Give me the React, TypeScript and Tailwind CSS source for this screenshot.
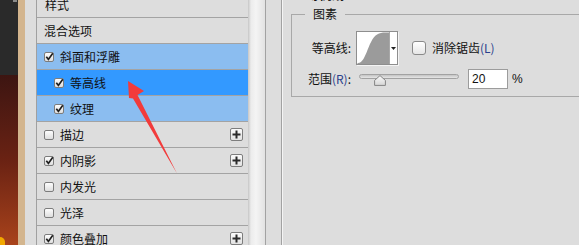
import React from "react";

const CJK = '"Noto Sans CJK SC", "Noto Sans", sans-serif';

function Check({ checked }: { checked: boolean }) {
  return (
    <svg width="10" height="10" viewBox="0 0 10 10" className="shrink-0">
      <defs>
        <linearGradient id="cbg" x1="0" y1="0" x2="0" y2="1">
          <stop offset="0" stopColor="#ffffff" />
          <stop offset="1" stopColor="#dcdcdc" />
        </linearGradient>
      </defs>
      <rect x="0.5" y="0.5" width="9" height="9" rx="1.5" fill="url(#cbg)" stroke="#7c7c7c" />
      {checked && (
        <path d="M2.3 4.8 L4.4 7.4 L8.8 1.2" fill="none" stroke="#1e1e1e" strokeWidth="1.7" />
      )}
    </svg>
  );
}

function Plus() {
  return (
    <div className="w-[13px] h-[13px] border border-[#7d7d7d] rounded-[2px] bg-gradient-to-b from-[#fafafa] to-[#e2e2e2] flex items-center justify-center">
      <svg width="9" height="9" viewBox="0 0 9 9">
        <path d="M4.5 0.5 V8.5 M0.5 4.5 H8.5" stroke="#2a2a2a" strokeWidth="2" />
      </svg>
    </div>
  );
}

type Row = {
  label: string;
  check?: boolean | null;
  sub?: boolean;
  bg?: string;
  plus?: boolean;
};

const rows: Row[] = [
  { label: "样式", check: null },
  { label: "混合选项", check: null },
  { label: "斜面和浮雕", check: true, bg: "light" },
  { label: "等高线", check: true, sub: true, bg: "dark" },
  { label: "纹理", check: true, sub: true, bg: "light" },
  { label: "描边", check: false, plus: true },
  { label: "内阴影", check: true, plus: true },
  { label: "内发光", check: false },
  { label: "光泽", check: false },
  { label: "颜色叠加", check: true, plus: true },
];

function ListRow({ r }: { r: Row }) {
  const bg =
    r.bg === "light" ? "bg-[#8bbdf0]" : r.bg === "dark" ? "bg-[#3399ff]" : "bg-[#dddddd]";
  const pl = r.check === null ? (r.label === "样式" ? "pl-[8px]" : "pl-[7px]") : r.sub ? "pl-[17px]" : "pl-[7px]";
  return (
    <div
      className={`h-[26px] shrink-0 border-b border-[#a3a3a3] flex items-center pr-[5px] ${bg} ${pl}`}
    >
      {r.check !== null && r.check !== undefined && (
        <div className="mr-[6px] flex items-center">
          <Check checked={r.check} />
        </div>
      )}
      <span className="text-[12px] leading-[16px] text-[#111]">{r.label}</span>
      <div className="flex-1" />
      {r.plus && <Plus />}
    </div>
  );
}

function ContourThumb() {
  return (
    <div className="w-[42px] h-[34px] border border-[#8e8e8e] bg-white flex shadow-[1px_1px_0_#f4f4f4]">
      <svg width="32" height="32" viewBox="0 0 32 32" className="block">
        <path d="M0 32 L1 31 C10 31 11 5 22 1.5 L26 0.5 L32 0.5 L32 32 Z" fill="#9b9b9b" />
      </svg>
      <div className="flex-1 border-l border-[#a8a8a8] flex items-center justify-center">
        <svg width="5" height="3" viewBox="0 0 5 3">
          <path d="M0 0 H5 L2.5 3 Z" fill="#222" />
        </svg>
      </div>
    </div>
  );
}

function Slider() {
  return (
    <div className="relative w-[100px] h-[20px] ml-[8px]">
      <div className="absolute left-0 right-0 top-[5px] h-[5px] rounded-full border border-[#a2a2a2] bg-gradient-to-b from-[#c4c4c4] to-[#e6e6e6]" />
      <svg width="12" height="11" viewBox="0 0 12 11" className="absolute left-[15px] top-[6px]">
        <defs>
          <linearGradient id="thumb" x1="0" y1="0" x2="0" y2="1">
            <stop offset="0" stopColor="#fbfbfb" />
            <stop offset="1" stopColor="#d6d6d6" />
          </linearGradient>
        </defs>
        <path d="M6 0.6 L11.4 5.4 V10.4 H0.6 V5.4 Z" fill="url(#thumb)" stroke="#858585" strokeLinejoin="round" />
      </svg>
    </div>
  );
}

export default function App() {
  return (
    <div
      className="relative w-[579px] h-[245px] overflow-hidden flex bg-[#dddddd]"
      style={{ fontFamily: CJK }}
    >
      {/* left image strip */}
      <div className="w-[18px] shrink-0 flex flex-col">
        <div className="h-[75px] bg-[#2a2a2a] relative">
          <div className="absolute right-[1px] top-0 w-[4px] h-[2px] bg-[#8a8a8a]" />
        </div>
        <div className="flex-1 bg-gradient-to-b from-[#3d1511] via-[#6a2213] to-[#a9431b] relative">
          <div className="absolute left-0 bottom-0 w-[5px] h-[8px] rounded-tr-full bg-[#f2a800]" />
        </div>
      </div>
      <div className="w-[7px] shrink-0 bg-[#d3b58e]" />
      <div className="w-[12px] shrink-0 bg-[#dddddd] border-r border-[#a0a0a0]" />

      {/* layer style list */}
      <div className="w-[211px] shrink-0 flex flex-col -mt-[8px]">
        {rows.map((r) => (
          <ListRow key={r.label} r={r} />
        ))}
      </div>

      {/* scrollbar */}
      <div className="w-[17px] shrink-0 bg-[linear-gradient(to_right,#c6c6c6_0px,#ececec_3px,#f4f4f4_8px,#e2e2e2_17px)]" />
      <div className="w-[17px] shrink-0 border-l border-r border-[#a2a2a2] bg-[#dddddd]" />

      {/* content */}
      <div className="flex-1 border-l border-[#f4f4f4] overflow-hidden flex flex-col">
        <div className="h-[3px] overflow-hidden pl-[25px]">
          <div className="-mt-[13px] text-[12px] leading-[16px] font-bold text-[#111]">等高线</div>
        </div>
        <fieldset className="mt-[3px] ml-[8px] w-[330px] border border-[#a8a8a8] pb-[7px]">
          <legend className="ml-[13px] px-[8px] text-[12px] leading-[16px] text-[#111]">图素</legend>
          <div className="pt-[9px] flex items-center">
            <div className="w-[59px] text-right text-[12px] leading-[16px] text-[#111]">等高线:</div>
            <div className="ml-[5px]">
              <ContourThumb />
            </div>
            <div className="ml-[14px] w-[14px] h-[14px] rounded-[3px] border border-[#8a8a8a] bg-gradient-to-b from-[#ffffff] to-[#e6e6e6]" />
            <div className="ml-[6px] text-[12px] leading-[16px] text-[#111]">
              消除锯齿<span className="text-[#2a3f8c]">(L)</span>
            </div>
          </div>
          <div className="mt-[4px] flex items-center">
            <div className="w-[59px] text-right text-[12px] leading-[16px] text-[#111]">
              范围<span className="text-[#2a3f8c]">(R)</span>:
            </div>
            <Slider />
            <div
              className="ml-[9px] w-[40px] h-[20px] border border-[#9c9c9c] bg-white flex items-center pl-[3px] text-[12px] text-[#111]"
              style={{ fontFamily: '"Liberation Sans", sans-serif' }}
            >
              20
            </div>
            <div
              className="ml-[4px] text-[12px] text-[#111]"
              style={{ fontFamily: '"Liberation Sans", sans-serif' }}
            >
              %
            </div>
          </div>
        </fieldset>
      </div>

      {/* red arrow annotation */}
      <svg
        width="579"
        height="245"
        viewBox="0 0 579 245"
        className="absolute left-0 top-0 pointer-events-none"
      >
        <polygon points="128,81 144,91 137.5,95 177,173.5 133,98.5 129,98" fill="#f23b3b" />
      </svg>
    </div>
  );
}
